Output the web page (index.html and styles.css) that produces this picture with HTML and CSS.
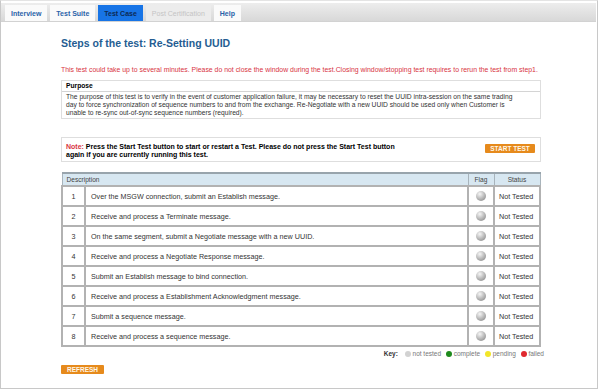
FILE: index.html
```html
<!DOCTYPE html>
<html lang="en">
  <head>
    <meta charset="UTF-8" />
    <title>Steps of the test</title>
    <link rel="stylesheet" href="styles.css">
  </head>
  <body>
    <div class="frame">
      <div class="tabs">
        <span class="tab">Interview</span>
        <span class="tab">Test Suite</span>
        <span class="tab active">Test Case</span>
        <span class="tab disabled">Post Certification</span>
        <span class="tab">Help</span>
      </div>

      <div class="content">
        <h1>Steps of the test: Re-Setting UUID</h1>

        <p class="warning">This test could take up to several minutes. Please do not close the window during the test.Closing window/stopping test requires to rerun the test from step1.</p>

        <div class="box purpose">
          <div class="box-head">Purpose</div>
          <div class="box-body">
            The purpose of this test is to verify in the event of customer application failure, it may be necessary to reset the UUID intra-session on the same trading<br>
            day to force synchronization of sequence numbers to and from the exchange. Re-Negotiate with a new UUID should be used only when Customer is<br>
            unable to re-sync out-of-sync sequence numbers (required).
          </div>
        </div>

        <div class="box note">
          <p><span class="note-label">Note:</span> Press the Start Test button to start or restart a Test. Please do not press the Start Test button<br>
          again if you are currently running this test.</p>
          <button class="btn" type="button">START TEST</button>
        </div>

        <table class="steps">
          <thead>
            <tr>
              <th colspan="2" class="desc-head">Description</th>
              <th>Flag</th>
              <th>Status</th>
            </tr>
          </thead>
          <tbody>
            <tr><td class="num">1</td><td>Over the MSGW connection, submit an Establish message.</td><td class="flag"><span class="ball"></span></td><td class="status">Not Tested</td></tr>
            <tr><td class="num">2</td><td>Receive and process a Terminate message.</td><td class="flag"><span class="ball"></span></td><td class="status">Not Tested</td></tr>
            <tr><td class="num">3</td><td>On the same segment, submit a Negotiate message with a new UUID.</td><td class="flag"><span class="ball"></span></td><td class="status">Not Tested</td></tr>
            <tr><td class="num">4</td><td>Receive and process a Negotiate Response message.</td><td class="flag"><span class="ball"></span></td><td class="status">Not Tested</td></tr>
            <tr><td class="num">5</td><td>Submit an Establish message to bind connection.</td><td class="flag"><span class="ball"></span></td><td class="status">Not Tested</td></tr>
            <tr><td class="num">6</td><td>Receive and process a Establishment Acknowledgment message.</td><td class="flag"><span class="ball"></span></td><td class="status">Not Tested</td></tr>
            <tr><td class="num">7</td><td>Submit a sequence message.</td><td class="flag"><span class="ball"></span></td><td class="status">Not Tested</td></tr>
            <tr><td class="num">8</td><td>Receive and process a sequence message.</td><td class="flag"><span class="ball"></span></td><td class="status">Not Tested</td></tr>
          </tbody>
        </table>

        <div class="key">
          <b>Key:</b>
          <span class="dot gray"></span> not tested
          <span class="dot green"></span> complete
          <span class="dot yellow"></span> pending
          <span class="dot red"></span> failed
        </div>

        <button class="btn refresh" type="button">REFRESH</button>
      </div>
    </div>
  </body>
</html>
```

FILE: styles.css
```css
body {
    margin: 0;
    font-family: "Liberation Sans", Arial, sans-serif;
    background: white;
}
.frame {
    width: 598px;
    height: 389px;
    box-sizing: border-box;
    border: 1px solid #c8c8c8;
    border-top-color: #e4e4e4;
}
.tabs {
    display: flex;
    gap: 3px;
    margin: 2px 1px 0 0;
    padding: 2px 0 0 4px;
    height: 16px;
    background: linear-gradient(#ededed, #d8d8d8);
    border-bottom: 1px solid #d2d2d2;
}
.tab {
    display: flex;
    align-items: center;
    padding: 0 6px;
    background: #fafafa;
    color: #2a62a8;
    font-size: 7px;
    font-weight: bold;
}
.tab.active {
    background: #1774e6;
    color: #0d2a55;
}
.tab.disabled {
    background: #ececec;
    color: #c4c4c4;
    font-weight: normal;
}
.content {
    width: 480px;
    margin-left: 60px;
}
h1 {
    margin: 15px 0 0;
    font-size: 10.5px;
    line-height: 12px;
    color: #245d92;
}
.warning {
    margin: 17px 0 6px;
    font-size: 6.9px;
    line-height: 8px;
    white-space: nowrap;
    color: #d8343f;
}
.box {
    border: 1px solid #dedede;
    font-size: 6.7px;
}
.box-head {
    padding: 1px 4px;
    line-height: 8px;
    font-weight: bold;
    border-bottom: 1px solid #d4d4d4;
}
.box-body {
    padding: 1px 4px;
    line-height: 8px;
    white-space: nowrap;
    color: #333;
}
.note {
    margin-top: 18px;
    display: flex;
    align-items: flex-start;
    justify-content: space-between;
    padding: 5px 5px 2px 4px;
    font-size: 7px;
}
.note p {
    margin: 0;
    font-weight: bold;
    line-height: 8px;
    white-space: nowrap;
}
.note-label {
    color: #d8343f;
}
.btn {
    border: none;
    border-radius: 1px;
    background: #e68a1c;
    color: #fff6e6;
    font-family: inherit;
    font-size: 6.5px;
    font-weight: bold;
    padding: 0 5px;
    height: 9px;
    line-height: 9px;
}
.note .btn {
    margin-top: 1px;
    width: 50px;
    padding: 0;
}
.steps {
    margin-top: 10px;
    width: 100%;
    border-collapse: collapse;
    font-size: 7.2px;
    color: #333;
}
.steps thead tr {
    height: 13px;
}
.steps tbody tr {
    height: 20px;
}
.steps th {
    background: #d7e7f1;
    border: 1px solid #a8b4bc;
    border-top: 2px solid #98a4ac;
    font-weight: normal;
    font-size: 6.6px;
    color: #444;
    padding: 0;
}
.steps th.desc-head {
    text-align: left;
    padding-left: 4px;
}
.steps td {
    border: 2px solid #b2b2b2;
    padding: 0 0 0 5px;
}
.steps td.num {
    width: 21px;
    padding: 0;
    text-align: center;
}
.steps td.flag {
    width: 24px;
    padding: 0;
    text-align: center;
}
.steps td.status {
    width: 40px;
    padding: 0 0 0 4px;
    white-space: nowrap;
}
.ball {
    display: inline-block;
    width: 10px;
    height: 10px;
    border-radius: 50%;
    vertical-align: middle;
    background: radial-gradient(circle at 38% 30%, #f6f6f6, #b4b4b4 55%, #7c7c7c);
}
.key {
    margin: 3px -3px 0 0;
    text-align: right;
    font-size: 6.5px;
    line-height: 8px;
    color: #777;
}
.key b {
    color: #333;
    margin-right: 2px;
}
.dot {
    display: inline-block;
    width: 6px;
    height: 6px;
    border-radius: 50%;
    vertical-align: -1px;
    margin-left: 3px;
}
.dot.gray { background: #d2d2d2; }
.dot.green { background: #1d8a1d; }
.dot.yellow { background: #f2e629; }
.dot.red { background: #e0282e; }
.refresh {
    margin-top: 4px;
    width: 43px;
    padding: 0;
}
```
